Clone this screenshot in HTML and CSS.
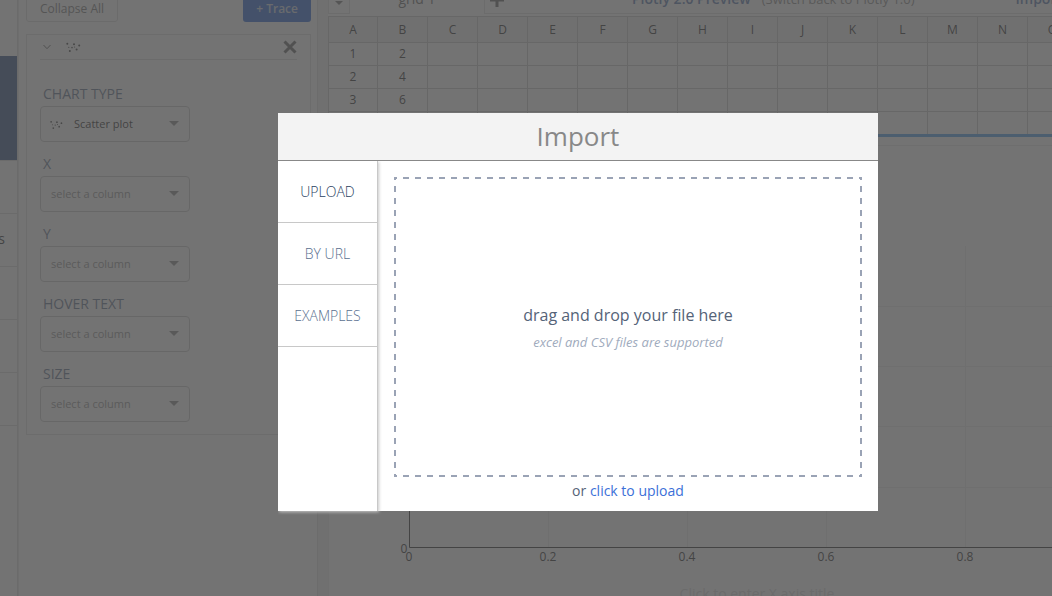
FILE: index.html
```html
<!DOCTYPE html>
<html lang="en">
<head>
<meta charset="utf-8">
<title>Chart workspace - Import</title>
<link rel="stylesheet" href="styles.css">
</head>
<body>
<svg class="symbols" aria-hidden="true">
  <symbol id="scatter" viewBox="0 0 15 11">
    <circle cx="1.3" cy="1.8" r="1"/><circle cx="2.8" cy="5.3" r=".6"/><circle cx="3.8" cy="9" r="1"/>
    <circle cx="6" cy="5.6" r=".8"/><circle cx="8" cy="2.2" r="1"/><circle cx="8.6" cy="5" r=".6"/>
    <circle cx="10.6" cy="7.5" r="1"/><circle cx="13.2" cy="3.4" r="1"/>
  </symbol>
</svg>
<div class="app">
  <nav class="rail" aria-label="Sections">
    <div class="rail-top"></div>
    <div class="rail-active"></div>
    <div class="rail-item"></div>
    <div class="rail-item">s</div>
    <div class="rail-item"></div>
    <div class="rail-item"></div>
    <div class="rail-item"></div>
  </nav>

  <aside class="panel">
    <div class="panel-actions">
      <button class="collapse" type="button">Collapse All</button>
      <button class="add-trace" type="button">+ Trace</button>
    </div>
    <section class="card">
      <header class="card-head">
        <svg class="chevron" viewBox="0 0 8 6" aria-hidden="true"><path d="M.5 1 4 4.7 7.5 1"/></svg>
        <svg class="scatter" aria-hidden="true"><use href="#scatter"/></svg>
        <button class="remove" type="button" aria-label="Remove trace">
          <svg viewBox="0 0 14 14" aria-hidden="true"><path d="M1.5 1.5 12.5 12.5M12.5 1.5 1.5 12.5"/></svg>
        </button>
      </header>
      <div class="field">
        <label for="type">CHART TYPE</label>
        <div class="select chosen">
          <svg class="scatter small" aria-hidden="true"><use href="#scatter"/></svg>
          <select id="type"><option>Scatter plot</option></select>
        </div>
      </div>
      <div class="field">
        <label for="x">X</label>
        <div class="select"><select id="x"><option>select a column</option></select></div>
      </div>
      <div class="field">
        <label for="y">Y</label>
        <div class="select"><select id="y"><option>select a column</option></select></div>
      </div>
      <div class="field">
        <label for="hover">HOVER TEXT</label>
        <div class="select"><select id="hover"><option>select a column</option></select></div>
      </div>
      <div class="field">
        <label for="size">SIZE</label>
        <div class="select"><select id="size"><option>select a column</option></select></div>
      </div>
    </section>
  </aside>

  <main class="workspace">
    <div class="topbar">
      <button class="tab-menu" type="button" aria-label="Grid menu"></button>
      <span class="tab-name">grid 1</span>
      <div class="topbar-rest">
        <button class="add-tab" type="button" aria-label="Add grid">
          <svg viewBox="0 0 16 16" aria-hidden="true"><path d="M8 1V15M1 8H15"/></svg>
        </button>
        <a class="preview" href="#">Plotly 2.0 Preview</a>
        <a class="switch" href="#">(Switch back to Plotly 1.0)</a>
        <a class="import-link" href="#">Import</a>
      </div>
    </div>
    <div class="grid-wrap">
      <table class="grid">
        <colgroup><col class="first"></colgroup>
        <thead><tr><th>A</th><th>B</th><th>C</th><th>D</th><th>E</th><th>F</th><th>G</th><th>H</th><th>I</th><th>J</th><th>K</th><th>L</th><th>M</th><th>N</th><th>O</th></tr></thead>
        <tbody>
          <tr><td>1</td><td>2</td><td></td><td></td><td></td><td></td><td></td><td></td><td></td><td></td><td></td><td></td><td></td><td></td><td></td></tr>
          <tr><td>2</td><td>4</td><td></td><td></td><td></td><td></td><td></td><td></td><td></td><td></td><td></td><td></td><td></td><td></td><td></td></tr>
          <tr><td>3</td><td>6</td><td></td><td></td><td></td><td></td><td></td><td></td><td></td><td></td><td></td><td></td><td></td><td></td><td></td></tr>
          <tr><td></td><td></td><td></td><td></td><td></td><td></td><td></td><td></td><td></td><td></td><td></td><td></td><td></td><td></td><td></td></tr>
        </tbody>
      </table>
    </div>
    <div class="chart">
      <svg width="900" height="480" role="img" aria-label="Empty chart">
        <g class="gridlines">
          <path d="M219.5 100V401M358.5 100V401M497.5 100V401M636.5 100V401"/>
          <path d="M81 160.5H900M81 220.5H900M81 280.5H900M81 341.5H900"/>
        </g>
        <path class="axis" d="M80.5 100V401.5H900"/>
        <g class="ticks">
          <text x="75" y="407">0</text>
          <text x="80" y="415">0</text>
          <text x="219" y="415">0.2</text>
          <text x="358" y="415">0.4</text>
          <text x="497" y="415">0.6</text>
          <text x="636" y="415">0.8</text>
        </g>
        <text class="axis-title" x="428" y="453">Click to enter X axis title</text>
      </svg>
    </div>
  </main>
</div>

<div class="overlay">
  <div class="modal" role="dialog" aria-modal="true" aria-labelledby="modal-title">
    <h1 class="modal-title" id="modal-title">Import</h1>
    <div class="modal-body">
      <div class="tabs">
        <button class="tab current" type="button">UPLOAD</button>
        <button class="tab" type="button">BY URL</button>
        <button class="tab" type="button">EXAMPLES</button>
      </div>
      <div class="upload">
        <div class="dropzone">
          <p class="drop-text">drag and drop your file here</p>
          <p class="drop-note">excel and CSV files are supported</p>
        </div>
        <p class="pick">or <a href="#">click to upload</a></p>
      </div>
    </div>
  </div>
</div>
</body>
</html>
```
FILE: styles.css
```css
* { box-sizing: border-box; }
body {
  margin: 0;
  height: 100vh;
  overflow: hidden;
  background: #fff;
  color: #444;
  font: 12px/18px "Open Sans", sans-serif;
}
button, select { font: inherit; color: inherit; }
button { cursor: pointer; }
a { text-decoration: none; }
p, h1 { margin: 0; }
.symbols { position: absolute; width: 0; height: 0; }

.app { display: flex; height: 100%; }

.rail { flex: none; width: 18px; border-right: 1px solid #ddd; overflow: hidden; font-size: 14px; }
.rail-top { height: 56px; }
.rail-active { height: 105px; background: #4a6595; border-bottom: 1px solid #dfdfdf; }
.rail-item {
  height: 53px;
  padding: 0 12px 2px 0;
  border-bottom: 1px solid #dfdfdf;
  display: flex;
  align-items: center;
  justify-content: flex-end;
}

.panel {
  flex: none;
  width: 310px;
  padding: 0 7px 0 8px;
  border-right: 10px solid #f2f2f2;
  box-shadow: inset 1px 0 0 #e9e9e9, inset -1px 0 0 #e2e2e2;
}
.panel-actions { display: flex; justify-content: space-between; align-items: flex-end; height: 22px; margin-bottom: 12px; }
.panel-actions button { flex: none; height: 26px; padding: 0 13px; border-radius: 3px; }
.panel-actions .collapse { border: 1px solid #dfdfdf; background: #fff; color: #888; }
.panel-actions .add-trace { border: 0; background: #447adb; color: #d5dce8; font-weight: 600; }

.card { padding: 0 13px 12px; border: 1px solid #e2e2e2; color: #777; }
.card-head { display: flex; align-items: center; gap: 15px; height: 25px; border-bottom: 1px solid #ddd; margin-bottom: 24px; }
.chevron { width: 8px; height: 6px; margin-left: 3px; fill: none; stroke: #777; }
.scatter { width: 15px; height: 11px; fill: #555; }
.small { width: 13px; height: 10px; }
.remove { margin-left: auto; padding: 0; border: 0; background: none; height: 14px; }
.remove svg { display: block; width: 14px; height: 14px; stroke: #777; stroke-width: 3; }
.field { margin-bottom: 12px; }
.field:last-child { margin-bottom: 0; }
.field label { display: block; margin-bottom: 2px; padding-left: 3px; font-size: 14px; line-height: 20px; color: #75849c; }
.select { position: relative; width: 150px; height: 36px; }
.select select {
  appearance: none;
  width: 100%;
  height: 100%;
  padding: 0 30px 0 10px;
  border: 1px solid #d0d0d0;
  border-radius: 4px;
  background: #fff;
  color: #a0a0a0;
  font-size: 11px;
}
.select.chosen select { padding-left: 33px; color: #444; }
.select .small { position: absolute; left: 10px; top: 14px; }
.select::after {
  content: "";
  position: absolute;
  right: 11px;
  top: 15px;
  border: 5px solid transparent;
  border-top-color: #999;
  border-bottom: 0;
}

.workspace { flex: 1; min-width: 0; overflow: hidden; }
.topbar { display: flex; align-items: flex-end; height: 14px; margin-bottom: 2px; font-size: 14px; }
.tab-menu { width: 22px; height: 30px; padding: 8px 6px 0; border: 1px solid #e2e2e2; background: #fff; }
.tab-menu::after { content: ""; display: block; border: 4px solid transparent; border-top-color: #888; border-bottom: 0; }
.tab-name { width: 134px; padding-bottom: 6px; text-align: center; color: #777; }
.topbar-rest { flex: 1; display: flex; align-items: flex-end; min-width: 0; height: 30px; border: 1px solid #e2e2e2; border-right: 0; white-space: nowrap; }
.topbar-rest a { padding-bottom: 5px; }
.add-tab { padding: 0 0 5px 4px; border: 0; background: none; line-height: 0; }
.add-tab svg { width: 16px; height: 16px; stroke: #777; stroke-width: 3; }
.preview { margin-left: 127px; color: #6d87b8; font-weight: 600; }
.switch { margin-left: 11px; color: #999; font-size: 13px; }
.import-link { margin-left: auto; margin-right: -10px; color: #6d87b8; font-weight: 600; }

.grid-wrap { overflow: hidden; border-bottom: 3px solid #66aaee; }
.grid { width: 750px; table-layout: fixed; border-collapse: collapse; }
.grid .first { width: 49px; }
.grid th, .grid td { height: 23px; padding: 0; border: 1px solid #cfcfcf; text-align: center; font-weight: 400; line-height: 20px; }
.grid th { height: 26px; background: #f4f4f4; }
.grid tr:last-child td { height: 22px; border-bottom: 0; }

.chart { margin-top: 8px; border-top: 1px solid #e9e9e9; border-left: 1px solid #eee; overflow: hidden; }
.chart svg { display: block; }
.gridlines path { fill: none; stroke: #eee; }
.axis { fill: none; stroke: #444; }
.ticks { fill: #444; text-anchor: middle; }
.axis-title { fill: #ddd; font-size: 14px; text-anchor: middle; }

.overlay {
  position: fixed;
  inset: 0;
  display: flex;
  align-items: center;
  justify-content: center;
  padding: 28px 0 0 104px;
  background: rgba(68, 68, 68, .75);
}
.modal { width: 600px; max-width: 100%; background: #fff; }
.modal-title {
  padding: 6px 0 7px;
  border-bottom: 1px solid #888;
  background: #f3f3f3;
  color: #888;
  font-size: 26px;
  line-height: 34px;
  font-weight: 400;
  text-align: center;
}
.modal-body { display: flex; }
.tabs { flex: none; width: 100px; border-right: 1px solid #c8c8c8; box-shadow: 1px 1px 3px #c8c8c8; clip-path: inset(0 -4px -4px 0); }
.tab {
  display: block;
  width: 100%;
  height: 62px;
  padding: 0;
  border: 0;
  border-bottom: 1px solid #c8c8c8;
  background: #fff;
  color: #5a708f;
  font-size: 14px;
  font-weight: 300;
}
.tab.current { color: #2a3f5f; }
.upload { flex: 1; padding: 16px 16px 10px; text-align: center; color: #556378; }
.dropzone {
  --dash: #9aa3b5 0 6px, transparent 6px 12px;
  display: flex;
  flex-direction: column;
  justify-content: center;
  height: 300px;
  padding-top: 2px;
  background:
    repeating-linear-gradient(90deg, var(--dash)) -3px 0 / calc(100% + 12px) 2px no-repeat,
    repeating-linear-gradient(90deg, var(--dash)) -3px 100% / calc(100% + 12px) 2px no-repeat,
    repeating-linear-gradient(180deg, var(--dash)) 0 -3px / 2px calc(100% + 12px) no-repeat,
    repeating-linear-gradient(180deg, var(--dash)) 100% -3px / 2px calc(100% + 12px) no-repeat;
}
.drop-text { font-size: 16px; line-height: 24px; }
.drop-note { margin-top: 3px; color: #a0abbd; font-size: 13px; line-height: 24px; font-style: italic; }
.pick { margin-top: 4px; font-size: 14px; line-height: 20px; }
.pick a { color: #3c70d8; }
```
